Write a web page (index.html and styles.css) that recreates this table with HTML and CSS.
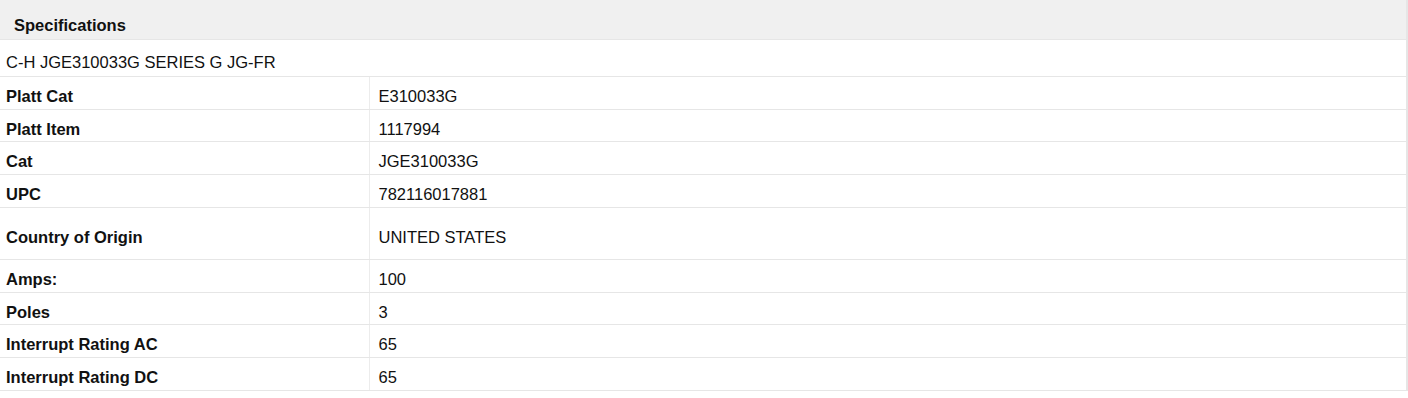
FILE: index.html
```html
<!DOCTYPE html>
<html>
<head>
<meta charset="utf-8">
<link rel="stylesheet" href="styles.css">
</head>
<body>
<table class="specs">
  <colgroup>
    <col class="col-label">
    <col class="col-value">
  </colgroup>
  <thead>
    <tr><th colspan="2" class="head">Specifications</th></tr>
  </thead>
  <tbody>
    <tr><td colspan="2" class="desc">C-H JGE310033G SERIES G JG-FR</td></tr>
    <tr><td class="label">Platt Cat</td><td class="value">E310033G</td></tr>
    <tr><td class="label">Platt Item</td><td class="value">1117994</td></tr>
    <tr><td class="label">Cat</td><td class="value">JGE310033G</td></tr>
    <tr><td class="label">UPC</td><td class="value">782116017881</td></tr>
    <tr class="tall"><td class="label">Country of Origin</td><td class="value">UNITED STATES</td></tr>
    <tr><td class="label">Amps:</td><td class="value">100</td></tr>
    <tr><td class="label">Poles</td><td class="value">3</td></tr>
    <tr><td class="label">Interrupt Rating AC</td><td class="value">65</td></tr>
    <tr><td class="label">Interrupt Rating DC</td><td class="value">65</td></tr>
  </tbody>
</table>
</body>
</html>
```
FILE: styles.css
```css
html, body {
  margin: 0;
  padding: 0;
  background: #ffffff;
}
body {
  font-family: "Liberation Sans", Arial, sans-serif;
  font-size: 16.5px;
  color: #111111;
}
.specs {
  width: 1408px;
  border-collapse: collapse;
  table-layout: fixed;
  border-right: 2px solid #e6e6e6;
}
.col-label {
  width: 369px;
}
.specs th, .specs td {
  line-height: 18.6px;
  text-align: left;
  vertical-align: middle;
  border-bottom: 1px solid #e6e6e6;
}
.head {
  background: #f0f0f0;
  font-weight: bold;
  padding: 16px 14px 4px;
  border-bottom: 1px solid #e4e4e4;
}
.desc {
  padding: 13px 6px 5px;
  font-weight: normal;
}
.label {
  padding: 10px 6px 3px;
  font-weight: bold;
  border-right: 1px solid #ececec;
}
.value {
  padding: 10px 8px 3px 9px;
}
.tall .label, .tall .value {
  padding-top: 20px;
  padding-bottom: 13px;
}
```
